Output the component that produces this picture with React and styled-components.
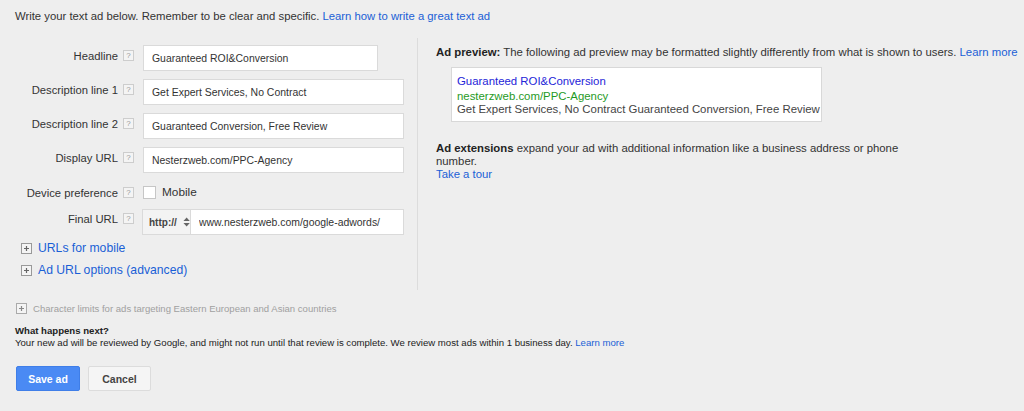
import React from 'react'
import styled, { createGlobalStyle } from 'styled-components'

const GlobalStyle = createGlobalStyle`
  body {
    margin: 0;
    background: #eeeeee;
    font-family: "Liberation Sans", Arial, sans-serif;
    color: #333;
  }
`

function HelpIcon() {
    return <Help>?</Help>
}

function PlusBox({ muted }) {
    return (
        <PlusSvg width="11" height="11" viewBox="0 0 11 11">
            <rect x="0.5" y="0.5" width="10" height="10" fill="#f4f4f4" stroke={muted ? '#aaa' : '#999'} />
            <path d="M3 5.5h5M5.5 3v5" stroke={muted ? '#888' : '#666'} strokeWidth="1.2" />
        </PlusSvg>
    )
}

function Field({ label, children, top }) {
    return (
        <Row>
            <Label top={top}>{label}</Label>
            <HelpCell top={top}><HelpIcon /></HelpCell>
            {children}
        </Row>
    )
}

function App() {
    return (
        <Page>
            <GlobalStyle />
            <Intro>
                Write your text ad below. Remember to be clear and specific. <Link href="#">Learn how to write a great text ad</Link>
            </Intro>
            <Main>
                <FormCol>
                    <Field label="Headline">
                        <Input width={235} defaultValue="Guaranteed ROI&Conversion" />
                    </Field>
                    <Field label="Description line 1">
                        <Input width={261} defaultValue="Get Expert Services, No Contract" />
                    </Field>
                    <Field label="Description line 2">
                        <Input width={261} defaultValue="Guaranteed Conversion, Free Review" />
                    </Field>
                    <Field label="Display URL">
                        <Input width={261} defaultValue="Nesterzweb.com/PPC-Agency" />
                    </Field>
                    <Field label="Device preference" top={5}>
                        <CheckLabel>
                            <Check />
                            Mobile
                        </CheckLabel>
                    </Field>
                    <Field label="Final URL" top={3}>
                        <UrlGroup>
                            <Protocol>
                                http://
                                <svg width="8" height="12" viewBox="0 0 8 12">
                                    <path d="M4 1L7.5 5H0.5z M4 11L0.5 7h7z" fill="#666" />
                                </svg>
                            </Protocol>
                            <UrlInput defaultValue="www.nesterzweb.com/google-adwords/" />
                        </UrlGroup>
                    </Field>
                    <Expander>
                        <PlusBox />
                        <BigLink href="#">URLs for mobile</BigLink>
                    </Expander>
                    <Expander>
                        <PlusBox />
                        <BigLink href="#">Ad URL options (advanced)</BigLink>
                    </Expander>
                </FormCol>
                <PreviewCol>
                    <PreviewHead>
                        <b>Ad preview:</b> The following ad preview may be formatted slightly differently from what is shown to users. <Link href="#">Learn more</Link>
                    </PreviewHead>
                    <AdBox>
                        <AdTitle>Guaranteed ROI&amp;Conversion</AdTitle>
                        <AdUrl>nesterzweb.com/PPC-Agency</AdUrl>
                        <AdDesc>Get Expert Services, No Contract Guaranteed Conversion, Free Review</AdDesc>
                    </AdBox>
                    <Extensions>
                        <b>Ad extensions</b> expand your ad with additional information like a business address or phone number.
                        <br />
                        <Link href="#">Take a tour</Link>
                    </Extensions>
                </PreviewCol>
            </Main>
            <Footer>
                <Limits>
                    <PlusBox muted />
                    Character limits for ads targeting Eastern European and Asian countries
                </Limits>
                <Next>
                    <strong>What happens next?</strong>
                    <span>
                        Your new ad will be reviewed by Google, and might not run until that review is complete. We review most ads within 1 business day. <Link href="#">Learn more</Link>
                    </span>
                </Next>
                <Buttons>
                    <Button primary>Save ad</Button>
                    <Button>Cancel</Button>
                </Buttons>
            </Footer>
        </Page>
    )
}

const Page = styled.div`
    width: 1024px;
    height: 411px;
    overflow: hidden;
`
const Intro = styled.div`
    padding: 9px 0 0 15px;
    height: 38px;
    box-sizing: border-box;
    font-size: 11.3px;
    line-height: 14px;
`
const Link = styled.a`
    color: #1a5fd6;
    text-decoration: none;
`
const BigLink = styled(Link)`
    font-size: 12.2px;
`
const Main = styled.div`
    display: flex;
    height: 252px;
`
const FormCol = styled.div`
    flex: none;
    width: 418px;
    box-sizing: border-box;
    border-right: 1px solid #dcdcdc;
    padding-top: 7px;
    display: flex;
    flex-direction: column;
    gap: 8px;
`
const Row = styled.div`
    display: flex;
    align-items: flex-start;
`
const Label = styled.div`
    width: 118px;
    text-align: right;
    font-size: 11.25px;
    line-height: 14px;
    padding-top: ${p => (p.top !== undefined ? p.top : 4)}px;
    color: #333;
`
const HelpCell = styled.div`
    padding: ${p => (p.top !== undefined ? p.top + 1 : 5)}px 9px 0 5px;
`
const Help = styled.span`
    display: block;
    width: 11px;
    height: 11px;
    box-sizing: border-box;
    border: 1px solid #cdcdcd;
    background: #f4f4f4;
    color: #999;
    font-size: 8px;
    line-height: 9px;
    text-align: center;
`
const Input = styled.input`
    width: ${p => p.width}px;
    height: 26px;
    box-sizing: border-box;
    border: 1px solid #dadada;
    background: #fff;
    padding: 0 8px;
    margin: 0;
    font-family: inherit;
    font-size: 10.45px;
    color: #333;
    outline: none;
`
const CheckLabel = styled.label`
    display: flex;
    align-items: center;
    gap: 6px;
    font-size: 11.8px;
    line-height: 17px;
    height: 17px;
    margin-top: 3px;
`
const Check = styled.span`
    display: block;
    width: 11px;
    height: 11px;
    border: 1px solid #c6c6c6;
    background: #fff;
`
const UrlGroup = styled.div`
    display: flex;
    margin-left: -1px;
    height: 26px;
`
const Protocol = styled.div`
    display: flex;
    align-items: center;
    gap: 6px;
    width: 48px;
    box-sizing: border-box;
    padding-left: 6px;
    border: 1px solid #dadada;
    border-right: none;
    background: #f3f3f3;
    font-size: 10px;
    font-weight: bold;
    color: #444;
`
const UrlInput = styled(Input)`
    width: 214px;
    height: 26px;
`
const Expander = styled.div`
    display: flex;
    align-items: center;
    gap: 6px;
    padding-left: 21px;
    height: 16px;
    margin-top: -3px;
    & + & {
        margin-top: -2px;
    }
`
const PlusSvg = styled.svg`
    flex: none;
`
const PreviewCol = styled.div`
    padding: 7px 0 0 18px;
`
const PreviewHead = styled.div`
    font-size: 11.35px;
    line-height: 14px;
    white-space: nowrap;
    b {
        color: #222;
    }
`
const AdBox = styled.div`
    margin: 8px 0 0 15px;
    width: 371px;
    height: 55px;
    box-sizing: border-box;
    background: #fff;
    border: 1px solid #d8d8d8;
    padding: 6px 0 0 5px;
    font-size: 11.4px;
    line-height: 14.5px;
`
const AdTitle = styled.div`
    color: #2424d8;
`
const AdUrl = styled.div`
    color: #1f9a1f;
`
const AdDesc = styled.div`
    color: #444;
    line-height: 13px;
`
const Extensions = styled.div`
    margin-top: 20px;
    width: 468px;
    font-size: 11.35px;
    line-height: 13px;
    b {
        color: #222;
    }
`
const Footer = styled.div`
    padding-left: 15px;
`
const Limits = styled.div`
    display: flex;
    align-items: center;
    gap: 6px;
    padding-left: 1px;
    margin-top: 13px;
    font-size: 9.55px;
    color: #a0a0a0;
`
const Next = styled.div`
    margin-top: 11px;
    display: flex;
    flex-direction: column;
    font-size: 9.6px;
    line-height: 12px;
    color: #222;
`
const Buttons = styled.div`
    display: flex;
    gap: 8px;
    margin-top: 17px;
    padding-left: 1px;
`
const Button = styled.button`
    height: 25px;
    width: ${p => (p.primary ? 64 : 63)}px;
    border-radius: 2px;
    border: 1px solid ${p => (p.primary ? '#3f7ee8' : '#dcdcdc')};
    background: ${p => (p.primary ? '#4a8af4' : '#f5f5f5')};
    color: ${p => (p.primary ? '#fff' : '#444')};
    font-family: inherit;
    font-weight: bold;
    font-size: 10.5px;
    padding: 0;
`

export default App
